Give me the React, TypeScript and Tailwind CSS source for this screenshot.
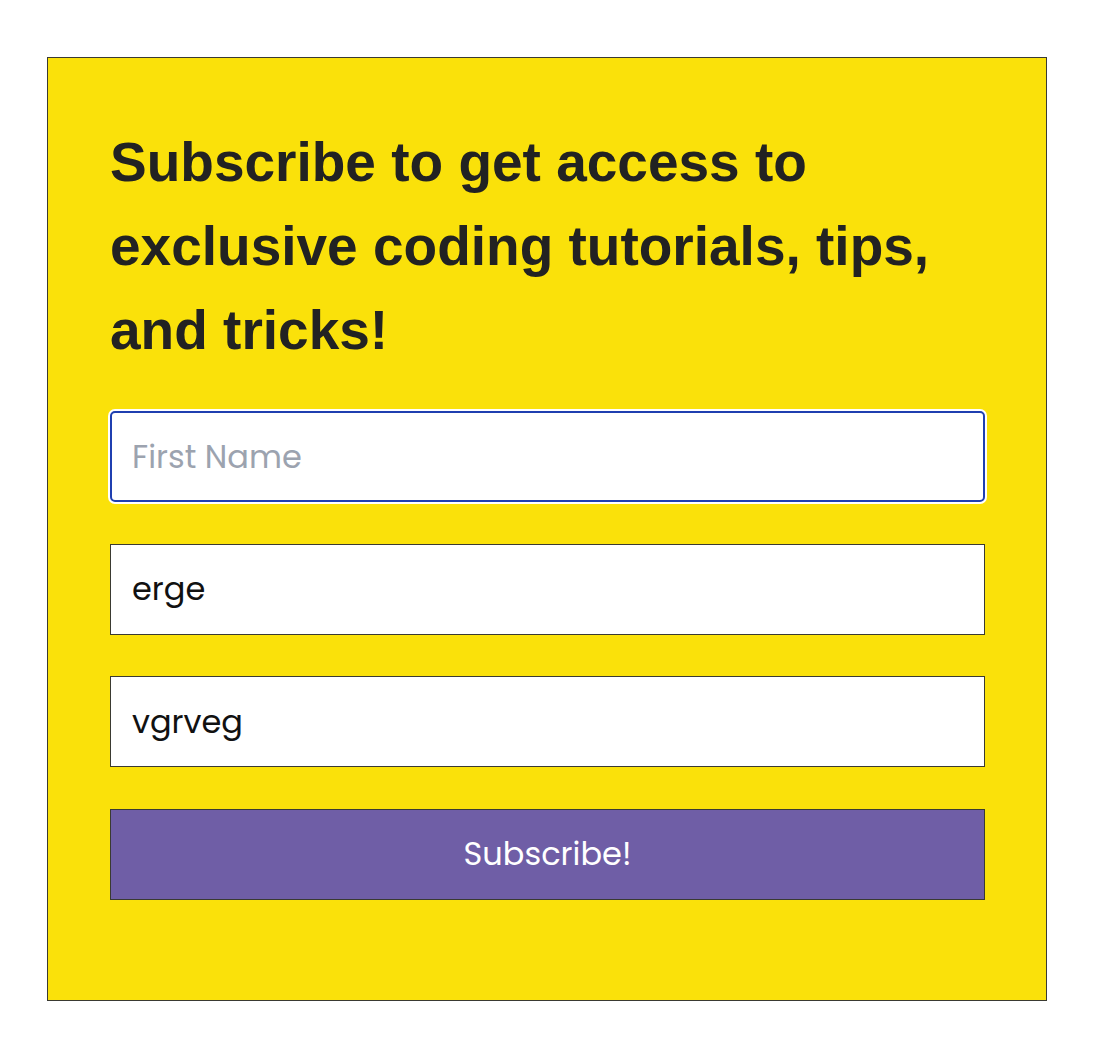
import React from 'react';

const sans = "font-['Poppins','Open_Sans','Liberation_Sans',sans-serif]";

const App: React.FC = () => {
  return (
    <div className="min-h-[1060px] bg-white pt-[57px] pl-[47px]">
      <div className="w-[1000px] h-[944px] bg-[#fae10a] border border-[#3a3a32] pl-[62px] pr-[61px] pt-[62px]">
        <h2 className="font-['Liberation_Sans',Arial,sans-serif] font-bold text-[55px] leading-[84px] text-[#222222] max-w-[860px]">
          Subscribe to get access to exclusive coding tutorials, tips, and tricks!
        </h2>

        <form className={`mt-[39px] flex flex-col gap-[41.5px] ${sans}`}>
          {/* first field drawn in its focused state */}
          <input
            type="text"
            placeholder="First Name"
            className="h-[91px] w-full bg-white border-2 border-[#1f3fb0] rounded-[5px] shadow-[0_0_0_2px_#ffffff] px-[20px] text-[32px] text-[#111] placeholder:text-[#9ca3af] outline-none"
          />
          <input
            type="text"
            defaultValue="erge"
            className="h-[91px] w-full bg-white border border-[#3a3a32] px-[21px] text-[32px] text-[#111] outline-none"
          />
          <input
            type="text"
            defaultValue="vgrveg"
            className="h-[91px] w-full bg-white border border-[#3a3a32] px-[21px] text-[32px] text-[#111] outline-none"
          />
          <button
            type="button"
            className="h-[91px] w-full bg-[#6f5ea6] border border-[#3a3a32] text-white text-[32px]"
          >
            Subscribe!
          </button>
        </form>
      </div>
    </div>
  );
};

export default App;
